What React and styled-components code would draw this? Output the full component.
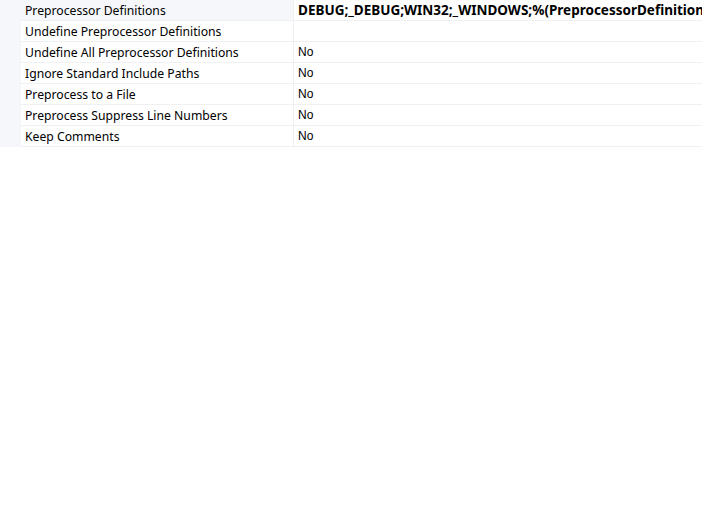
import React from "react";
import styled, { createGlobalStyle } from "styled-components";

const Global = createGlobalStyle`
  html, body { margin: 0; padding: 0; background: #ffffff; overflow: hidden; }
  body { width: 702px; height: 509px; }
`;

const Grid = styled.div`
  display: flex;
  flex-direction: column;
  width: 702px;
`;

const Row = styled.div`
  display: grid;
  grid-template-columns: 21px 273px 1fr;
  height: 21px;
`;

const Gutter = styled.div`
  background: #f5f7fb;
`;

const Cell = styled.div`
  box-sizing: border-box;
  height: 21px;
  border-bottom: 1px solid #eef0f4;
  display: flex;
  align-items: center;
  padding-left: 4px;
  white-space: nowrap;
  overflow: hidden;
  color: #000;
  font-size: 12px;
`;

const LabelCell = styled(Cell)`
  border-right: 1px solid #eef0f4;
  background: ${(p) => (p.$selected ? "#f5f7fb" : "#ffffff")};
  font-family: "Noto Sans", "Noto Sans CJK JP", sans-serif;
  font-size: 12.2px;
`;

const ValueCell = styled(Cell)`
  font-family: ${(p) => (p.$bold ? `"Noto Sans", "Noto Sans CJK JP", sans-serif` : `"Liberation Sans", Arial, sans-serif`)};
  font-weight: ${(p) => (p.$bold ? 700 : 400)};
  font-size: ${(p) => (p.$bold ? "13.5px" : "12px")};
`;

const rows = [
  { label: "Preprocessor Definitions", value: "DEBUG;_DEBUG;WIN32;_WINDOWS;%(PreprocessorDefinitions)", bold: true, selected: true },
  { label: "Undefine Preprocessor Definitions", value: "" },
  { label: "Undefine All Preprocessor Definitions", value: "No" },
  { label: "Ignore Standard Include Paths", value: "No" },
  { label: "Preprocess to a File", value: "No" },
  { label: "Preprocess Suppress Line Numbers", value: "No" },
  { label: "Keep Comments", value: "No" },
];

export default function App() {
  return (
    <>
      <Global />
      <Grid>
        {rows.map((r) => (
          <Row key={r.label}>
            <Gutter />
            <LabelCell $selected={r.selected}>{r.label}</LabelCell>
            <ValueCell $bold={r.bold}>{r.value}</ValueCell>
          </Row>
        ))}
      </Grid>
    </>
  );
}
